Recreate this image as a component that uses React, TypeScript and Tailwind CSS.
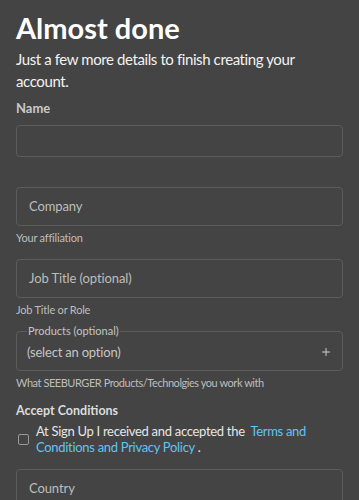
import { Plus } from "lucide-react";

function Helper({ children, className = "" }: { children: React.ReactNode; className?: string }) {
  return (
    <p className={`mt-[5px] text-[11px] leading-[14px] tracking-[-0.2px] text-[#bdbdbd] ${className}`}>
      {children}
    </p>
  );
}

function Field({ placeholder }: { placeholder: string }) {
  return (
    <div className="h-[39px] rounded-[4px] border border-[#5c5c5c] flex items-center px-[12px] text-[13px] tracking-[-0.1px] text-[#bdbdbd]">
      {placeholder}
    </div>
  );
}

export default function App() {
  return (
    <div
      className="min-h-[500px] bg-[#444444] px-4 pt-[10px] text-white"
      style={{ fontFamily: "Lato, 'Noto Sans', sans-serif" }}
    >
      <h1 className="text-[29px] leading-[36px] font-bold">Almost done</h1>
      <p className="mt-[2px] text-[15px] leading-[22px] tracking-[-0.4px] text-[#f2f2f2]">
        Just a few more details to finish creating your account.
      </p>

      <label className="mt-[8px] block text-[13px] leading-[16px] font-bold text-[#c9c9c9]">
        Name
      </label>
      <div className="mt-[9px] h-[32px] rounded-[4px] border border-[#5c5c5c]" />

      <div className="mt-[30px]">
        <Field placeholder="Company" />
        <Helper>Your affiliation</Helper>
      </div>

      <div className="mt-[14px]">
        <Field placeholder="Job Title (optional)" />
        <Helper>Job Title or Role</Helper>
      </div>

      <div className="mt-[7px]">
        <fieldset className="rounded-[4px] border border-[#5c5c5c] px-[10px] pb-[8px] pt-[4px]">
          <legend className="px-[1px] text-[11px] leading-[14px] text-[#c4c4c4]">
            Products (optional)
          </legend>
          <div className="flex items-center justify-between text-[13px] leading-[20px] tracking-[-0.2px] text-[#c4c4c4]">
            <span>(select an option)</span>
            <Plus size={12} strokeWidth={2} className="text-[#cfcfcf]" />
          </div>
        </fieldset>
        <Helper className="tracking-[-0.45px]">What SEEBURGER Products/Technolgies you work with</Helper>
      </div>

      <h2 className="mt-[12px] text-[12.5px] leading-[18px] font-bold text-[#dcdcdc]">
        Accept Conditions
      </h2>
      <div className="mt-[3px] flex items-center gap-[7px] pl-[2px]">
        <span className="h-[11px] w-[11px] shrink-0 rounded-[2px] border border-[#9a9a9a]" />
        <p className="text-[13px] leading-[16px] tracking-[-0.3px] text-[#e6e6e6]">
          At Sign Up I received and accepted the&nbsp;{" "}
          <a className="text-[#5cc6f5]">Terms and Conditions and Privacy Policy</a> .
        </p>
      </div>

      <div className="mt-[14px]">
        <Field placeholder="Country" />
      </div>
    </div>
  );
}
